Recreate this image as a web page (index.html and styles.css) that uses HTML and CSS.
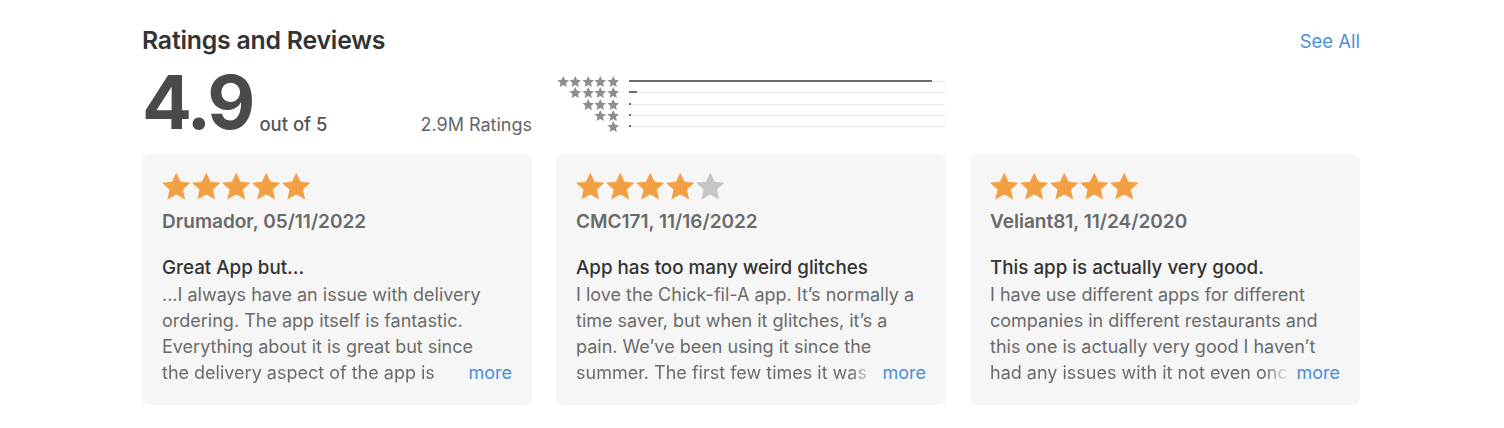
FILE: index.html
```html
<!DOCTYPE html>
<html lang="en">
<head>
<meta charset="utf-8">
<link rel="stylesheet" href="styles.css">
<title>Ratings and Reviews</title>
</head>
<body>
<svg width="0" height="0" class="defs">
  <defs>
    <symbol id="star" viewBox="1.4 1.2 21.2 20.1">
      <polygon points="12,1.2 15.2,8.1 22.6,8.9 17,13.9 18.6,21.3 12,17.5 5.4,21.3 7,13.9 1.4,8.9 8.8,8.1"/>
    </symbol>
  </defs>
</svg>
<section class="section">
  <header class="head">
    <h2 class="title">Ratings and Reviews</h2>
    <a class="see-all" href="#">See All</a>
  </header>
  <div class="summary">
    <div class="score">
      <span class="big">4.9</span>
      <span class="outof">out of 5</span>
    </div>
    <div class="count">2.9M Ratings</div>
    <div class="hist">
      <div class="hstars"><svg><use href="#star"/></svg><svg><use href="#star"/></svg><svg><use href="#star"/></svg><svg><use href="#star"/></svg><svg><use href="#star"/></svg></div>
      <div class="track"><div class="fill" style="width:96%"></div></div>
      <div class="hstars"><svg><use href="#star"/></svg><svg><use href="#star"/></svg><svg><use href="#star"/></svg><svg><use href="#star"/></svg></div>
      <div class="track"><div class="fill" style="width:2.5%"></div></div>
      <div class="hstars"><svg><use href="#star"/></svg><svg><use href="#star"/></svg><svg><use href="#star"/></svg></div>
      <div class="track"><div class="fill" style="width:0.7%"></div></div>
      <div class="hstars"><svg><use href="#star"/></svg><svg><use href="#star"/></svg></div>
      <div class="track"><div class="fill" style="width:0.2%"></div></div>
      <div class="hstars"><svg><use href="#star"/></svg></div>
      <div class="track"><div class="fill" style="width:0.7%"></div></div>
    </div>
  </div>
  <div class="cards">
    <article class="card">
      <div class="stars"><svg class="on"><use href="#star"/></svg><svg class="on"><use href="#star"/></svg><svg class="on"><use href="#star"/></svg><svg class="on"><use href="#star"/></svg><svg class="on"><use href="#star"/></svg></div>
      <div class="author">Drumador, 05/11/2022</div>
      <h3 class="rtitle">Great App but...</h3>
      <p class="rbody">...I always have an issue with delivery<br>ordering. The app itself is fantastic.<br>Everything about it is great but since</p>
      <div class="last">
        <span class="fade">the delivery aspect of the app is</span>
        <a class="more" href="#">more</a>
      </div>
    </article>
    <article class="card">
      <div class="stars"><svg class="on"><use href="#star"/></svg><svg class="on"><use href="#star"/></svg><svg class="on"><use href="#star"/></svg><svg class="on"><use href="#star"/></svg><svg class="off"><use href="#star"/></svg></div>
      <div class="author">CMC171, 11/16/2022</div>
      <h3 class="rtitle">App has too many weird glitches</h3>
      <p class="rbody">I love the Chick-fil-A app. It’s normally a<br>time saver, but when it glitches, it’s a<br>pain. We’ve been using it since the</p>
      <div class="last">
        <span class="fade">summer. The first few times it was</span>
        <a class="more" href="#">more</a>
      </div>
    </article>
    <article class="card">
      <div class="stars"><svg class="on"><use href="#star"/></svg><svg class="on"><use href="#star"/></svg><svg class="on"><use href="#star"/></svg><svg class="on"><use href="#star"/></svg><svg class="on"><use href="#star"/></svg></div>
      <div class="author">Veliant81, 11/24/2020</div>
      <h3 class="rtitle">This app is actually very good.</h3>
      <p class="rbody">I have use different apps for different<br>companies in different restaurants and<br>this one is actually very good I haven’t</p>
      <div class="last">
        <span class="fade">had any issues with it not even once</span>
        <a class="more" href="#">more</a>
      </div>
    </article>
  </div>
</section>
</body>
</html>
```
FILE: styles.css
```css
* { box-sizing: border-box; }
html, body { margin: 0; padding: 0; background: #fff; }
body {
  font-family: Inter, "Noto Sans", "Liberation Sans", sans-serif;
  color: #333;
}
.defs { position: absolute; }
.section {
  width: 1218px;
  margin: 0 0 0 142px;
  padding-top: 26px;
}
.head {
  display: flex;
  justify-content: space-between;
  align-items: center;
  height: 28px;
}
.title {
  margin: 0;
  font-size: 24.8px;
  font-weight: 600;
  letter-spacing: -0.2px;
  color: #333;
  line-height: 28px;
}
.see-all {
  font-size: 18.5px;
  color: #4a8fdc;
  text-decoration: none;
  margin-top: 2px;
}
.summary {
  display: flex;
  align-items: flex-start;
  height: 72px;
  margin-top: 7px;
}
.score {
  display: flex;
  align-items: baseline;
  width: 276px;
}
.big {
  font-size: 74px;
  font-weight: 700;
  letter-spacing: -3px;
  line-height: 82px;
  color: #4a4a4c;
}
.outof {
  font-size: 18.5px;
  font-weight: 500;
  color: #555;
  margin-left: 7px;
  position: relative;
  top: 2px;
}
.count {
  width: 114px;
  text-align: right;
  font-size: 18px;
  color: #666;
  padding-top: 53px;
  white-space: nowrap;
}
.hist {
  margin-left: 24px;
  margin-top: 15px;
  display: grid;
  grid-template-columns: 63px 316px;
  column-gap: 10px;
  grid-auto-rows: 11.3px;
  align-items: center;
}
.hstars {
  display: flex;
  justify-content: flex-end;
}
.hstars svg {
  width: 12.5px;
  height: 11px;
  fill: #8e8e8e;
}
.track {
  height: 1px;
  background: #e6e6e6;
}
.fill {
  height: 2px;
  margin-top: -1px;
  background: #6b6b6b;
  min-width: 2px;
}
.cards {
  display: grid;
  grid-template-columns: repeat(3, 390px);
  column-gap: 24px;
  margin-top: 21px;
}
.card {
  background: #f6f6f6;
  border-radius: 7px;
  height: 251px;
  padding: 18px 20px 0 20px;
}
.stars {
  display: flex;
  gap: 1.5px;
  height: 28px;
}
.stars svg {
  width: 28.5px;
  height: 28px;
}
.stars .on { fill: #f3a044; }
.stars .off { fill: #c6c6c6; }
.author {
  font-size: 19px;
  font-weight: 600;
  color: #6a6a6a;
  margin-top: 11px;
  line-height: 22px;
  white-space: nowrap;
}
.rtitle {
  margin: 24px 0 0 0;
  font-size: 18.8px;
  font-weight: 500;
  color: #333;
  line-height: 22px;
  white-space: nowrap;
}
.rbody {
  margin: 3px 0 0 0;
  font-size: 18px;
  line-height: 26px;
  color: #6b6b6b;
  white-space: nowrap;
}
.last {
  display: flex;
  align-items: baseline;
  font-size: 18px;
  line-height: 26px;
}
.fade {
  flex: 1;
  min-width: 0;
  overflow: hidden;
  white-space: nowrap;
  color: #6b6b6b;
  -webkit-mask-image: linear-gradient(to right, #000 calc(100% - 26px), transparent);
  mask-image: linear-gradient(to right, #000 calc(100% - 26px), transparent);
}
.more {
  margin-left: 6px;
  color: #4a8fdc;
  text-decoration: none;
  white-space: nowrap;
}
```
